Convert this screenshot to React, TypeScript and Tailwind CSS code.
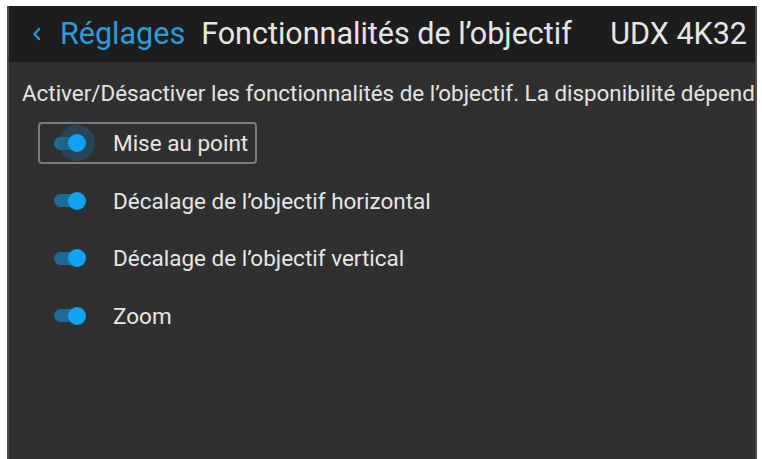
import React from 'react';

const features = [
  { label: 'Mise au point', focused: true },
  { label: 'Décalage de l’objectif horizontal', focused: false },
  { label: 'Décalage de l’objectif vertical', focused: false },
  { label: 'Zoom', focused: false },
];

const Toggle = ({ focused }: { focused: boolean }) => (
  <div className="relative w-[34px] h-[20px] flex items-center">
    <div className="w-[30px] h-[13px] rounded-full bg-[#1d6c98]" />
    {focused && (
      <div className="absolute left-[5px] top-[-8px] w-[36px] h-[36px] rounded-full bg-[#1d5a7c]/50" />
    )}
    <div className="absolute left-[14px] top-[1px] w-[18px] h-[18px] rounded-full bg-[#10a4f0]" />
  </div>
);

export default function App() {
  return (
    <div className="w-[762px] h-[459px] bg-white pt-[6px] pl-[7px] pr-[5px] overflow-hidden" style={{ fontFamily: 'Roboto, "Liberation Sans", sans-serif' }}>
      <div className="h-full flex flex-col bg-[#303030] border-l-2 border-r-2 border-[#4a4a4a] overflow-hidden">
        {/* header */}
        <div className="h-[56px] shrink-0 bg-[#1d1d1d] flex items-center pl-[22px] pr-[8px] whitespace-nowrap">
          <svg width="12" height="16" viewBox="0 0 12 16" className="mr-[17px]">
            <path d="M8 3 L3.5 8 L8 13" fill="none" stroke="#1e98d6" strokeWidth="2.4" strokeLinecap="round" strokeLinejoin="round" />
          </svg>
          <span className="text-[30.5px] text-[#2a9cd8] leading-none">Réglages</span>
          <span className="ml-[16px] text-[30.5px] text-[#e6e6e6] leading-none">Fonctionnalités de l’objectif</span>
          <span className="ml-auto text-[30.5px] text-[#e6e6e6] leading-none">UDX 4K32</span>
        </div>

        {/* description (runs past the panel edge, as on the device) */}
        <div className="pl-[13px] pt-[20px] whitespace-nowrap text-[22.4px] text-[#e4e4e4] leading-none">
          Activer/Désactiver les fonctionnalités de l’objectif. La disponibilité dépend du type d’objectif.
        </div>

        {/* toggles */}
        <div className="flex flex-col pl-[29px] pt-[18px]">
          {features.map((f) => (
            <div key={f.label} className="h-[57.5px] flex items-start">
              <div
                className={
                  'h-[42px] flex items-center pl-[14px] pr-[7px] rounded-[4px] border-2 ' +
                  (f.focused ? 'border-[#7a7a7a]' : 'border-transparent')
                }
              >
                <Toggle focused={f.focused} />
                <span className="ml-[25px] text-[22.5px] text-[#e6e6e6] leading-none whitespace-nowrap">{f.label}</span>
              </div>
            </div>
          ))}
        </div>
      </div>
    </div>
  );
}
